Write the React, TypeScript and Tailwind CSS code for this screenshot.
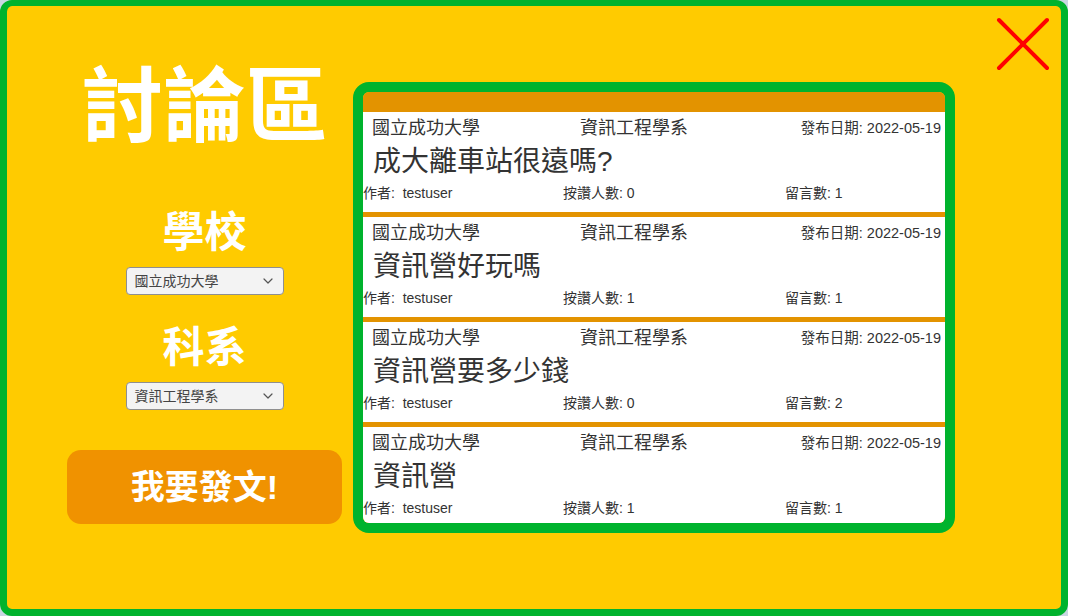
import React from "react";

const posts = [
  { title: "成大離車站很遠嗎?", likes: 0, comments: 1 },
  { title: "資訊營好玩嗎", likes: 1, comments: 1 },
  { title: "資訊營要多少錢", likes: 0, comments: 2 },
  { title: "資訊營", likes: 1, comments: 1 },
];

const font = { fontFamily: '"Liberation Sans", "Noto Sans CJK TC", sans-serif' };

function FakeSelect({ label }: { label: string }) {
  return (
    <div className="w-[158px] h-[28px] rounded-[4px] border border-[#8f8f8f] bg-[#f3f3f3] flex items-center pl-[8px] pr-[10px] text-[14px] text-[#444]">
      <span className="flex-1 leading-none">{label}</span>
      <svg width="10" height="6" viewBox="0 0 10 6" fill="none">
        <path d="M1 1l4 4 4-4" stroke="#555" strokeWidth="1.2" strokeLinecap="round" strokeLinejoin="round" />
      </svg>
    </div>
  );
}

function PostCard({ title, likes, comments }: { title: string; likes: number; comments: number }) {
  return (
    <div className="bg-white h-[100px] shrink-0 text-[#333]">
      <div className="h-[32px] flex items-center pl-[9px] pr-[4px]">
        <span className="w-[208px] text-[18px] leading-none">國立成功大學</span>
        <span className="text-[18px] leading-none">資訊工程學系</span>
        <span className="ml-auto text-[14.5px] leading-none">發布日期: 2022-05-19</span>
      </div>
      <div className="h-[36px] flex items-center pl-[10px] text-[28px] leading-none">{title}</div>
      <div className="h-[26px] flex items-center text-[14px] leading-none">
        <span className="w-[200px] whitespace-pre">作者:  testuser</span>
        <span className="w-[222px]">按讚人數: {likes}</span>
        <span>留言數: {comments}</span>
      </div>
    </div>
  );
}

export default function App() {
  return (
    <div className="w-[1068px] h-[616px] bg-[#c9d6e2]" style={font}>
      <div className="relative h-full flex rounded-[12px] border-[7px] border-t-[6px] border-[#00b32d] bg-[#ffcb00]">
        {/* Left: filters */}
        <div className="ml-[60px] w-[275px] flex flex-col items-center">
          <h1 className="mt-[60px] h-[82px] text-[82px] leading-[82px] font-bold text-white">討論區</h1>
          <h2 className="mt-[64px] h-[42px] text-[42px] leading-[42px] font-bold text-white">學校</h2>
          <div className="mt-[13px]">
            <FakeSelect label="國立成功大學" />
          </div>
          <h2 className="mt-[32px] h-[42px] text-[42px] leading-[42px] font-bold text-white">科系</h2>
          <div className="mt-[13px]">
            <FakeSelect label="資訊工程學系" />
          </div>
          <button className="mt-[40px] w-[275px] h-[74px] rounded-[14px] bg-[#f09200] text-white text-[34px] font-bold leading-none">
            我要發文!
          </button>
        </div>

        {/* Right: post list */}
        <div className="ml-[11px] mt-[76px] w-[602px] h-[451px] rounded-[16px] border-[10px] border-[#00b32d] overflow-hidden">
          <div className="h-full bg-[#e39300] pt-[20px] flex flex-col gap-[5px] overflow-hidden">
            {posts.map((p) => (
              <PostCard key={p.title} {...p} />
            ))}
          </div>
        </div>

        {/* Close button */}
        <svg className="absolute right-[7px] top-[8px]" width="62" height="62" viewBox="0 0 62 62">
          <path d="M7 6L55 54M55 6L7 54" stroke="#ff0000" strokeWidth="4" strokeLinecap="round" />
        </svg>
      </div>
    </div>
  );
}
